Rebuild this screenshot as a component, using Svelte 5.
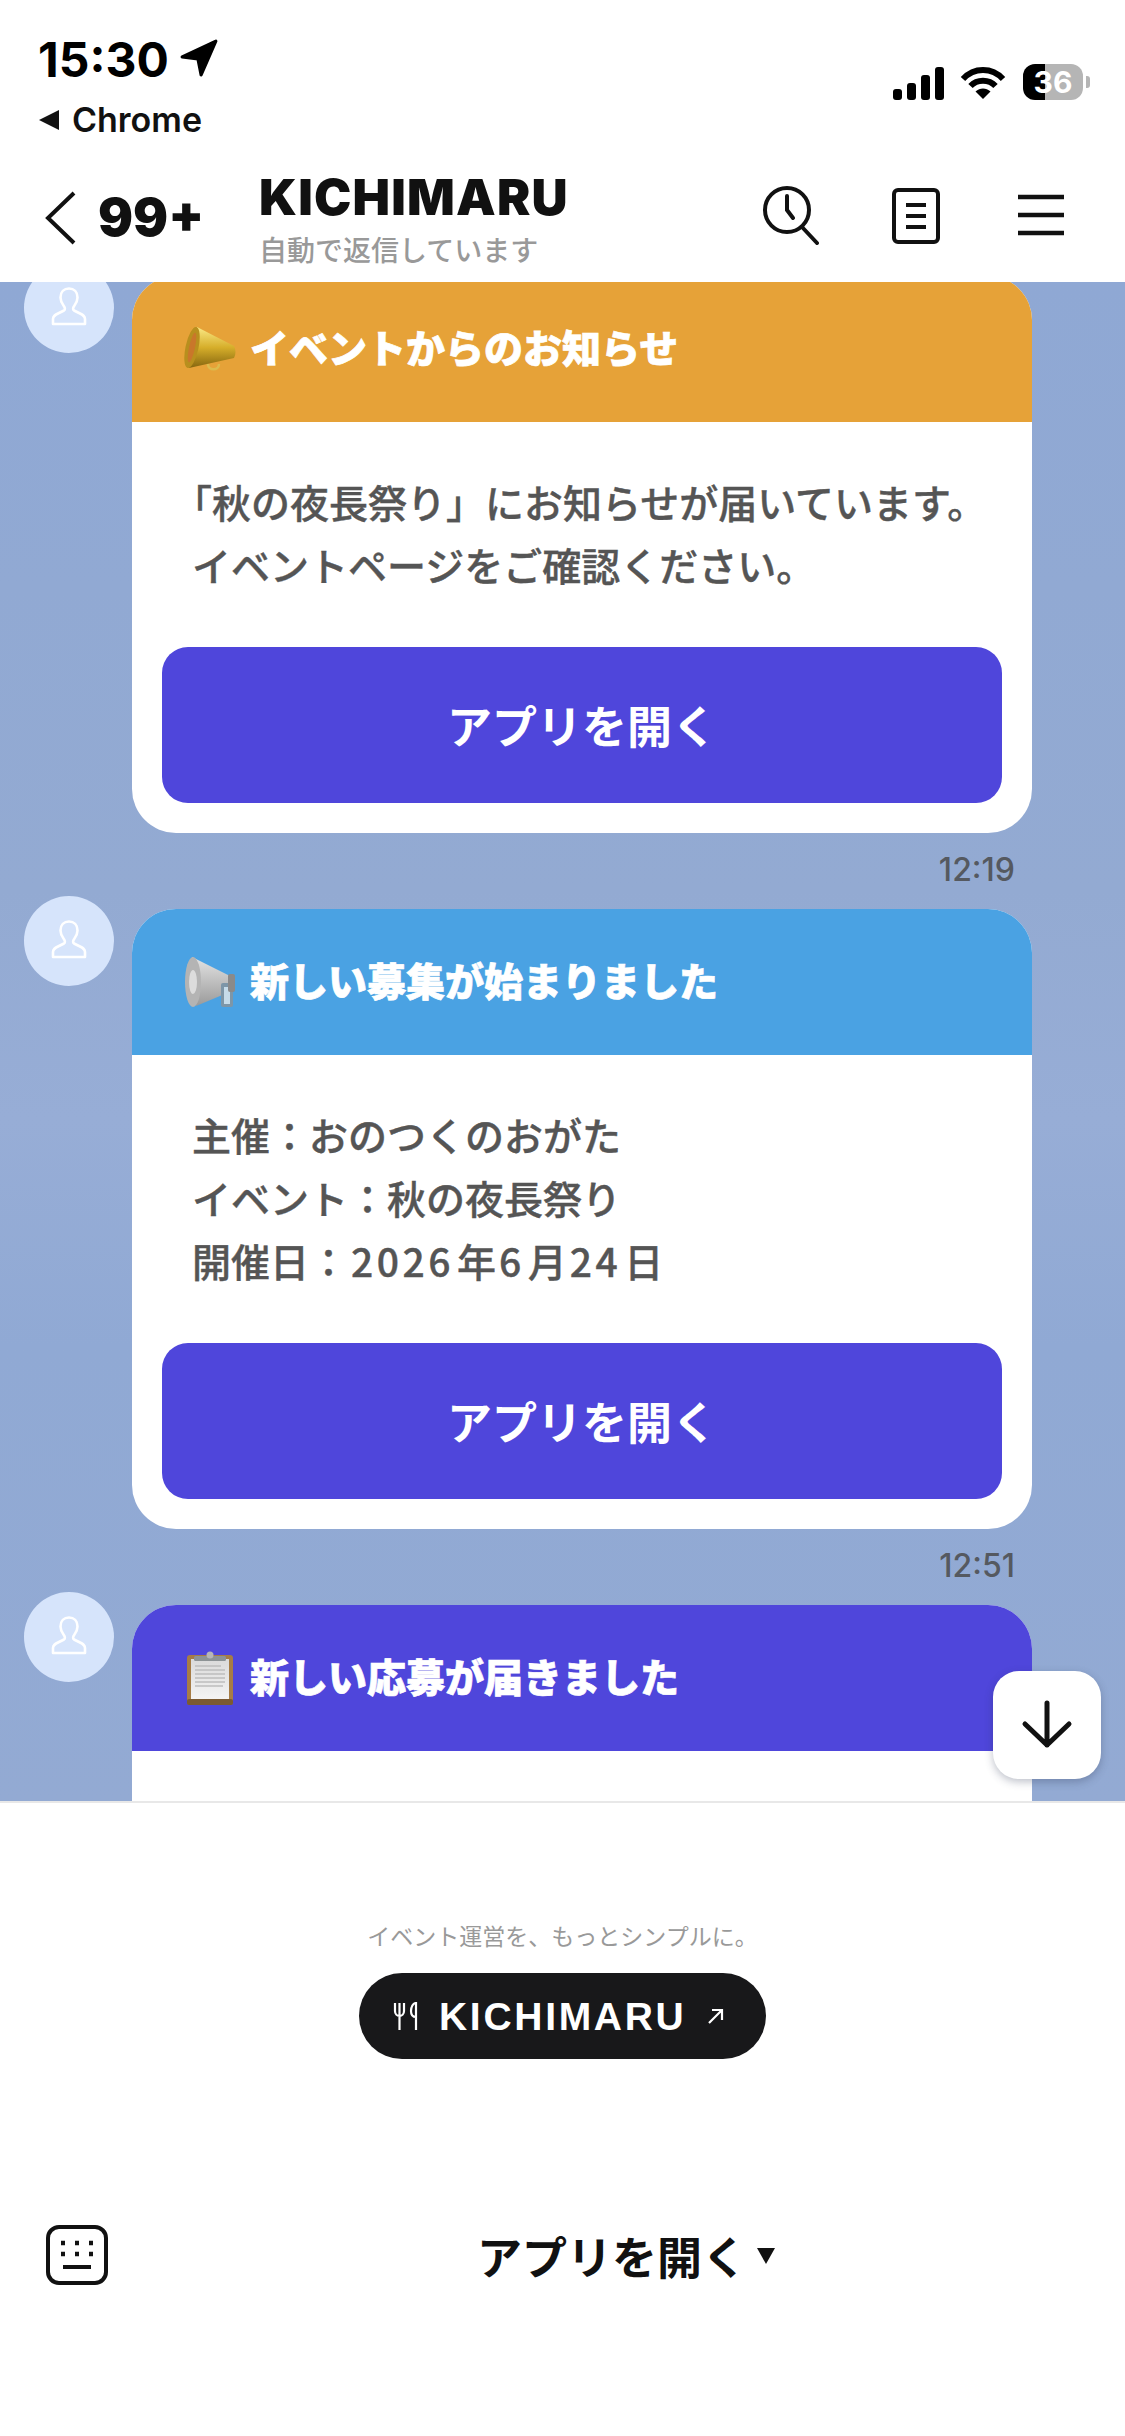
<script>
	const cards = [
		{ id: 'horn', color: '#e6a238', title: 'イベントからのお知らせ', lines: ['「秋の夜長祭り」にお知らせが届いています。', 'イベントページをご確認ください。'], time: '12:19' },
		{ id: 'speaker', color: '#4aa2e3', title: '新しい募集が始まりました', lines: ['主催：おのつくのおがた', 'イベント：秋の夜長祭り', '開催日：2026年6月24日'], time: '12:51' },
		{ id: 'board', color: '#4f46db', title: '新しい応募が届きました', lines: [], time: '' }
	];
</script>

<div class="screen">
	<header class="top">
		<div class="status">
			<div class="status-left">
				<div class="clock">
					<span>15:30</span>
					<svg width="40" height="40" viewBox="0 0 38 38"><path d="M35 3 21 35 18 20 3 18Z" fill="#000" stroke="#000" stroke-width="3" stroke-linejoin="round" /></svg>
				</div>
				<div class="return">
					<svg width="22" height="22" viewBox="0 0 22 22"><path d="M21 1v20L1 11Z" fill="#111" /></svg>
					<span>Chrome</span>
				</div>
			</div>
			<div class="status-right">
				<div class="signal"><i style="height:11px"></i><i style="height:17px"></i><i style="height:25px"></i><i style="height:33px"></i></div>
				<svg width="46" height="34" viewBox="0 0 46 34" fill="none" stroke="#000" stroke-width="6"><path d="M3 13C14 1 32 1 43 13" /><path d="M10.500 20C17 13 29 13 35.500 20" /><path d="M23 33 15.500 25.500C20 21.500 26 21.500 30.500 25.500Z" fill="#000" stroke="none" /></svg>
				<div class="battery"><span>36</span></div>
				<i class="nub"></i>
			</div>
		</div>
		<nav class="nav">
			<svg class="back" width="32" height="54" viewBox="0 0 32 54" fill="none" stroke="#111" stroke-width="4"><path d="M29 2 3 27l26 25" /></svg>
			<b class="count">99+</b>
			<div class="name">
				<strong>KICHIMARU</strong>
				<small>自動で返信しています</small>
			</div>
			<div class="tools">
				<svg width="60" height="60" viewBox="0 0 60 60" fill="none" stroke="#111" stroke-width="4" stroke-linecap="round"><circle cx="26" cy="25" r="22" /><path d="M26 11v14l6 8M41 42l15 16" /></svg>
				<svg width="48" height="56" viewBox="0 0 48 56" fill="none" stroke="#111" stroke-width="4"><rect x="2" y="2" width="44" height="52" rx="4" /><path d="M14 17h20M14 28h20M14 39h20" /></svg>
				<svg width="46" height="42" viewBox="0 0 46 42" fill="none" stroke="#111" stroke-width="4.500"><path d="M0 3h46M0 21h46M0 39h46" /></svg>
			</div>
		</nav>
	</header>

	<main class="chat">
		<div class="thread">
			{#each cards as card}
				<section class="msg">
					<div class="avatar">
						<svg width="90" height="90" viewBox="0 0 90 90" fill="none" stroke="#fff" stroke-width="2.600" stroke-linejoin="round"><path d="M29 61v-5c0-3 2-4 5-5.500l6-3c1.500-1 1-3-.5-5-1.500-2-3-5-3-8 0-5.500 3.500-9 8.500-9s8.500 3.500 8.500 9c0 3-1.500 6-3 8-1.500 2-2 4-.5 5l6 3c3 1.500 5 2.500 5 5.500v5Z" /></svg>
					</div>
					<div class="stack">
						<article class="card">
							<h2 style="background:{card.color}">
								{#if card.id === 'horn'}
									<svg width="52" height="46" viewBox="0 0 52 46">
										<defs><linearGradient id="gold" x1="0" y1="0" x2="0" y2="1"><stop offset="0" stop-color="#fbe985" /><stop offset=".5" stop-color="#d6ae2a" /><stop offset="1" stop-color="#86660f" /></linearGradient></defs>
										<path d="M13 1 50 20c2 4 2 8 0 12L5 42Z" fill="url(#gold)" />
										<ellipse cx="8" cy="21.500" rx="6.500" ry="21" fill="#b88f1e" transform="rotate(12 8 21.500)" />
										<ellipse cx="8" cy="21.500" rx="3" ry="15" fill="#c9772a" transform="rotate(12 8 21.500)" />
										<path d="M24 38c0 7 11 7 11 0" fill="none" stroke="#dcbb4c" stroke-width="2.500" />
									</svg>
								{:else if card.id === 'speaker'}
									<svg width="52" height="52" viewBox="0 0 52 52">
										<defs><linearGradient id="steel" x1="0" y1="0" x2="0" y2="1"><stop offset="0" stop-color="#e4e4e4" /><stop offset="1" stop-color="#9a9a9a" /></linearGradient></defs>
										<path d="M8 1 48 21v14L12 50Z" fill="url(#steel)" />
										<ellipse cx="9" cy="26" rx="8" ry="25" fill="#b4b4b4" />
										<ellipse cx="9" cy="26" rx="4" ry="12" fill="#dcdcdc" />
										<rect x="37" y="27" width="12" height="24" rx="2" fill="#7d96a8" />
										<rect x="40" y="31" width="6" height="17" fill="#c6dcea" />
										<rect x="44" y="18" width="7" height="18" rx="2" fill="#8a8a8a" />
									</svg>
								{:else}
									<svg width="46" height="54" viewBox="0 0 46 54">
										<defs><linearGradient id="paper" x1="0" y1="0" x2="0" y2="1"><stop offset="0" stop-color="#dadada" /><stop offset="1" stop-color="#f4f4f4" /></linearGradient></defs>
										<rect y="4" width="46" height="50" rx="3" fill="#a67c45" />
										<rect y="48" width="46" height="6" rx="2" fill="#7b5a32" />
										<rect x="4" y="8" width="38" height="40" fill="url(#paper)" />
										<path d="M8 15h26M8 19h30M8 23h30M8 27h30M8 31h30M8 35h28" stroke="#bdbdbd" stroke-width="1.500" />
										<rect x="7" y="5" width="32" height="5" rx="1.500" fill="#8d9395" />
										<circle cx="23" cy="4" r="3.500" fill="#b6b6b6" />
									</svg>
								{/if}
								<span>{card.title}</span>
							</h2>
							{#if card.lines.length}
								<div class="body">
									{#each card.lines as line}
										<p class:hang={line.startsWith('「')}>
											{#each line.split(/(\d+)/) as part}
												{#if /^\d+$/.test(part)}<span class="num">{part}</span>{:else}{part}{/if}
											{/each}
										</p>
									{/each}
								</div>
								<button class="open">アプリを開く</button>
							{:else}
								<div class="more"></div>
							{/if}
						</article>
						{#if card.time}
							<time>{card.time}</time>
						{/if}
					</div>
				</section>
			{/each}
		</div>
		<button class="down" aria-label="Scroll down">
			<svg width="56" height="56" viewBox="0 0 56 56" fill="none" stroke="#111" stroke-width="5" stroke-linecap="round" stroke-linejoin="round"><path d="M28 6v42M6 27l22 21 22-21" /></svg>
		</button>
	</main>

	<footer class="menu">
		<p class="tagline">イベント運営を、もっとシンプルに。</p>
		<a class="brand" href="#top">
			<svg width="26" height="28" viewBox="0 0 26 28" fill="none" stroke="#fff" stroke-width="2.200"><path d="M2 1v8c0 3 2 5 4.500 5S11 12 11 9V1M6.500 1v27" /><path d="M23 1c-3 0-5 4-5 8s2 6 5 6Zm0 0v27" /></svg>
			<span>KICHIMARU</span>
			<svg width="16" height="16" viewBox="0 0 16 16" fill="none" stroke="#fff" stroke-width="2.200"><path d="M1 15 14 2M4 2h10v10" /></svg>
		</a>
		<div class="bar">
			<svg class="keys" width="62" height="60" viewBox="0 0 62 60" fill="none" stroke="#111"><rect x="2" y="2" width="58" height="56" rx="11" stroke-width="4" /><path d="M15 18h4M29 18h4M43 18h4M15 29h4M29 29h4M43 29h4" stroke-width="4.500" /><path d="M17 42h28" stroke-width="4" /></svg>
			<div class="label">
				<span>アプリを開く</span>
				<svg width="18" height="16" viewBox="0 0 18 16"><path d="M0 0h18L9 16Z" fill="#111" /></svg>
			</div>
		</div>
	</footer>
</div>

<style>
	:global(body) { margin: 0; background: #fff; }
	.screen { width: 1125px; height: 2436px; overflow: hidden; font-family: "Noto Sans CJK JP", "Noto Sans", sans-serif; color: #111; }
	.top { height: 282px; box-sizing: border-box; background: #fff; }
	.status { display: flex; justify-content: space-between; height: 150px; box-sizing: border-box; padding: 38px 35px 0 38px; }
	.clock { display: flex; align-items: center; gap: 10px; height: 44px; font: 700 48px/44px Inter, sans-serif; color: #000; }
	.clock svg { margin-top: -4px; }
	.return { display: flex; align-items: center; gap: 12px; margin-top: 22px; height: 32px; font: 600 34px/32px Inter, sans-serif; }
	.status-right { display: flex; align-items: flex-end; gap: 14px; height: 62px; }
	.signal { display: flex; align-items: flex-end; gap: 5px; height: 33px; margin-right: 2px; }
	.signal i { display: block; width: 9px; border-radius: 3px; background: #000; }
	.battery { width: 60px; height: 36px; border-radius: 12px; background: linear-gradient(90deg, #000 0 36%, #b5b5b5 36%); display: flex; align-items: center; justify-content: center; color: #fff; font: 700 30px/36px Inter, sans-serif; margin-left: 3px; }
	.nub { width: 4px; height: 12px; margin: 0 0 12px -11px; border-radius: 0 3px 3px 0; background: #b5b5b5; }
	.nav { display: flex; align-items: flex-start; height: 132px; padding-left: 45px; }
	.back { margin-top: 41px; }
	.count { margin: 42px 0 0 21px; width: 161px; font: 900 52px/52px Inter, sans-serif; }
	.name { display: flex; flex-direction: column; }
	.name strong { font: 900 50px/48px Inter, sans-serif; margin-top: 23px; letter-spacing: 1.200px; }
	.name small { margin-top: 12px; font-size: 28px; line-height: 32px; font-weight: 500; color: #999; }
	.tools { display: flex; align-items: center; margin-left: auto; margin-right: 61px; margin-top: 35px; height: 60px; }
	.tools svg:nth-child(1) { margin-right: 71px; }
	.tools svg:nth-child(2) { margin-right: 78px; margin-top: 2px; }
	.chat { position: relative; height: 1521px; overflow: hidden; background: linear-gradient(180deg, #8fa8d4 0%, #93aad2 40%, #97add6 55%, #90a9d4 70%, #93aad3 100%); }
	.thread { margin-top: -19px; padding-left: 24px; }
	.msg { display: flex; gap: 18px; margin-bottom: 7px; }
	.avatar { flex: none; width: 90px; height: 90px; border-radius: 50%; background: #d6e4fb; }
	.avatar svg { display: block; }
	.stack { width: 900px; margin-top: 13px; }
	.card { border-radius: 44px; overflow: hidden; background: #fff; padding-bottom: 30px; }
	.card h2 { display: flex; align-items: center; gap: 14px; height: 146px; margin: 0; padding-left: 52px; padding-bottom: 5px; box-sizing: border-box; color: #fff; font-size: 39px; font-weight: 900; line-height: 1; -webkit-text-stroke: .7px #fff; }
	.card h2 svg { flex: none; width: 52px; margin-top: 5px; }
	.body { padding: 48px 60px 51px; color: #555; font-size: 39px; font-weight: 500; line-height: 63px; -webkit-text-stroke: .4px #555; }
	.body p { margin: 0; white-space: nowrap; }
	.body p.hang { margin-left: -19px; }
	.num { letter-spacing: 3.500px; padding: 0 3px; }
	.more { height: 200px; }
	.open { display: block; width: 840px; height: 156px; margin: 0 auto; padding-bottom: 2px; border: 0; border-radius: 26px; background: #4f46db; color: #fff; font: 700 45px/1 "Noto Sans CJK JP", sans-serif; }
	time { display: block; margin-top: 17px; padding-right: 17px; height: 39px; text-align: right; color: #555960; font: 500 32px/39px Inter, sans-serif; }
	.down { position: absolute; left: 993px; top: 1389px; width: 108px; height: 108px; display: grid; place-items: center; padding: 0; border: 0; border-radius: 26px; background: #fff; box-shadow: 0 3px 8px rgba(40,50,80,.3); }
	.menu { display: flex; flex-direction: column; align-items: center; height: 633px; box-sizing: border-box; border-top: 2px solid #e8e8e8; margin-top: -2px; position: relative; background: #fff; }
	.tagline { margin: 117px 0 0; color: #999; font-size: 23px; line-height: 30px; }
	.brand { display: flex; align-items: center; width: 407px; height: 86px; margin-top: 23px; box-sizing: border-box; padding-left: 34px; border-radius: 43px; background: #18181a; color: #fff; text-decoration: none; font: 700 39px/1 "Liberation Sans", Arial, sans-serif; letter-spacing: 2.700px; }
	.brand span { margin: 0 22px 0 20px; }
	.bar { display: flex; align-items: center; align-self: stretch; margin-top: 164px; padding-left: 46px; }
	.label { display: flex; align-items: center; gap: 10px; margin-left: 369px; margin-top: 3px; font-size: 45px; font-weight: 600; line-height: 60px; color: #111; }
</style>
